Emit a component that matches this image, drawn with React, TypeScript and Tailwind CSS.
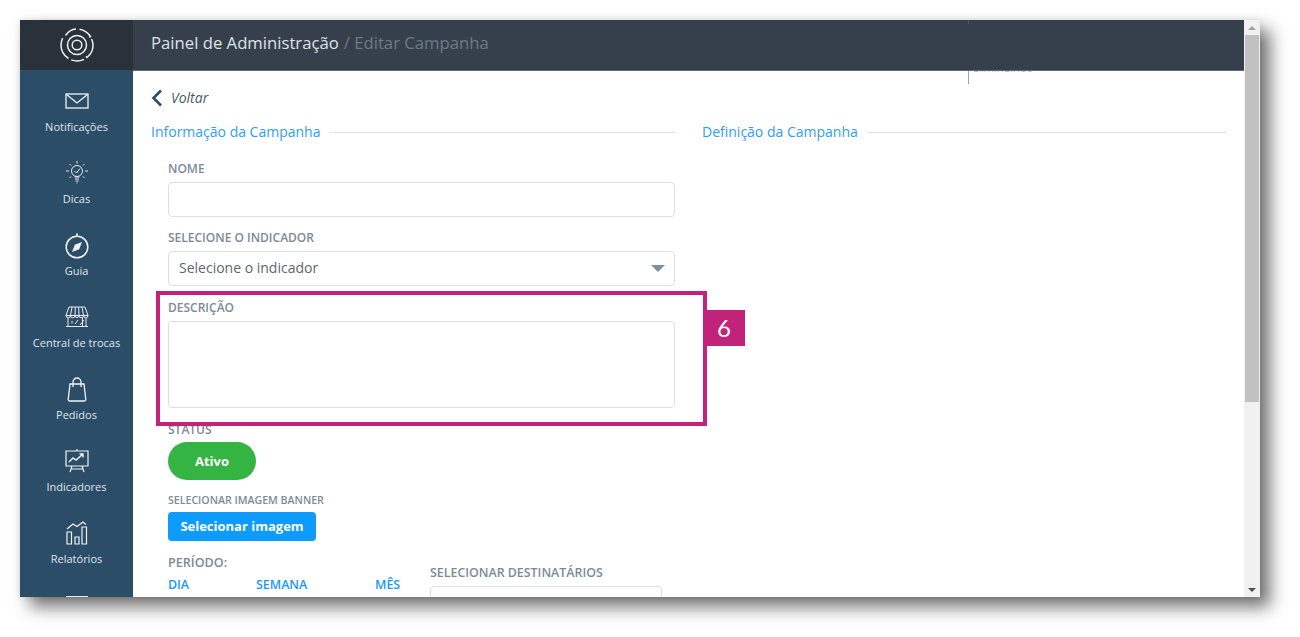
import type { ReactNode } from 'react';

function LogoIcon() {
  return (
    <svg width="34" height="34" viewBox="0 0 34 34" fill="none" stroke="#eef1f3" strokeWidth="1.500">
      <circle cx="17" cy="17" r="4.800" />
      <circle cx="17" cy="17" r="9.500" />
      <path d="M5.500 7.500C8.500 3.500 12.500 1.200 16 1.100M19.500 1.300C24 2 28 4.800 30.500 8.500l-1.300.8M31.500 11c1 2 1.500 4 1.500 6 0 5-2.200 9.500-6 12.500l-1-1.200M24 31.300c-2.200 1.100-4.500 1.700-7 1.700-2 0-4-.4-5.800-1.100M8.500 30.500C3.800 27.500 1 22.500 1 17c0-2.500.6-5 1.700-7" />
    </svg>
  );
}

function MailIcon() {
  return (
    <svg width="24" height="16" viewBox="0 0 24 16" fill="none" stroke="#f0f3f5" strokeWidth="1.300">
      <rect x="1" y="1" width="22" height="14" />
      <path d="M1.500 1.500L12 10l10.500-8.500" />
    </svg>
  );
}

function BulbIcon() {
  return (
    <svg width="22" height="24" viewBox="0 0 22 24" fill="none" stroke="#e6ebef" strokeWidth="1">
      <circle cx="11" cy="10" r="5.500" />
      <path d="M8.500 10l2 2 3.500-4.500M8.500 16h5M9 18h4M9.500 20h3M10.500 22h1" />
      <path d="M11 0v2.500M3.500 3l1.500 1.500M18.500 3L17 4.500M0 10h3M19 10h3M3.500 17l1.500-1.500M18.500 17L17 15.500" />
    </svg>
  );
}

function CompassIcon() {
  return (
    <svg width="24" height="27" viewBox="0 0 24 27" fill="none">
      <circle cx="12" cy="15" r="10.800" stroke="#f0f3f5" strokeWidth="1.500" />
      <path d="M11 1.500h2v2h-2z" fill="#f0f3f5" />
      <path d="M17 10l-2.800 7.200L7 20l2.800-7.200z" fill="#f0f3f5" />
    </svg>
  );
}

function StoreIcon() {
  return (
    <svg width="24" height="22" viewBox="0 0 24 22" fill="none" stroke="#e6ebef" strokeWidth="1">
      <path d="M4 1h16l3 8.500H1zM7 1L5.500 9.500M10.300 1L10 9.500M13.700 1L14 9.500M17 1l1.500 8.500" />
      <path d="M1 9.500a2 2 0 004.500 0M5.500 9.500a2.200 2.200 0 004.500 0M10 9.500a2 2 0 004 0M14 9.500a2.200 2.200 0 004.500 0M18.500 9.500a2 2 0 004.500 0" />
      <path d="M3 12v8M21 12v8M1 20.500h22M7 15v2.500M13 14l-3 4M19 14l-4 5M17.500 12v8" />
    </svg>
  );
}

function BagIcon() {
  return (
    <svg width="20" height="25" viewBox="0 0 20 25" fill="none" stroke="#f0f3f5" strokeWidth="1.300">
      <path d="M3 7h14l1.800 15.500a1.500 1.500 0 01-1.500 1.500H2.700a1.500 1.500 0 01-1.500-1.500z" />
      <path d="M6 10V5a4 4 0 018 0v5" />
    </svg>
  );
}

function BoardIcon() {
  return (
    <svg width="24" height="24" viewBox="0 0 24 24" fill="none" stroke="#f0f3f5" strokeWidth="1.200">
      <path d="M1 2h22v15H1zM12 0v2M7 17l-2 6M17 17l2 6M6 20h12" />
      <path d="M4 13l4-4 3 2 7-6M14.500 5H18v3.500" strokeWidth="1.400" />
    </svg>
  );
}

function BarsIcon() {
  return (
    <svg width="22" height="24" viewBox="0 0 22 24" fill="none" stroke="#f0f3f5" strokeWidth="1.200">
      <path d="M1 11h4.500v12H1zM9 16h4v7H9zM16 6h4.500v17H16z" />
      <path d="M1 8l6-5 4 2.500L17 1l3 2.500" />
    </svg>
  );
}

const navItems: { label: string; icon: ReactNode }[] = [
  { label: 'Notificações', icon: <MailIcon /> },
  { label: 'Dicas', icon: <BulbIcon /> },
  { label: 'Guia', icon: <CompassIcon /> },
  { label: 'Central de trocas', icon: <StoreIcon /> },
  { label: 'Pedidos', icon: <BagIcon /> },
  { label: 'Indicadores', icon: <BoardIcon /> },
  { label: 'Relatórios', icon: <BarsIcon /> },
];

function Label({ children, className = '' }: { children: ReactNode; className?: string }) {
  return <div className={`leading-[16px] font-semibold text-[#7b8a99] ${className}`}>{children}</div>;
}

function SectionTitle({ children }: { children: ReactNode }) {
  return (
    <div className="flex items-center gap-[9px]">
      <span className="text-[14px] leading-[20px] text-[#2f9dfb] whitespace-nowrap">{children}</span>
      <div className="h-px flex-1 bg-[#dfe1e3]" />
    </div>
  );
}

export default function App() {
  return (
    <div className="h-[637px] w-[1300px] overflow-hidden bg-white pl-[20px] pt-[20px] font-['Open_Sans',sans-serif]">
      <div className="relative flex h-[577px] w-[1240px] overflow-hidden shadow-[10px_10px_16px_rgba(0,0,0,0.55),0_0_6px_rgba(0,0,0,0.12)]">
        {/* menu lateral */}
        <aside className="flex w-[113px] shrink-0 flex-col bg-[#2c4d67]">
          <div className="flex h-[50px] shrink-0 items-center justify-center bg-[#29313a] pb-[1px]">
            <LogoIcon />
          </div>
          <div className="flex flex-col pt-[11px]">
            {navItems.map((item) => (
              <div key={item.label} className="flex h-[72px] shrink-0 flex-col items-center">
                <div className="flex h-[38px] items-center justify-center pt-[2px]">{item.icon}</div>
                <span className="text-[11px] leading-[15px] text-[#dfe5ea] whitespace-nowrap">{item.label}</span>
              </div>
            ))}
            <div className="mx-auto mt-[11px] h-px w-[22px] bg-[#dfe5ea]" />
          </div>
        </aside>

        <main className="flex min-w-0 flex-1 flex-col bg-white">
          <header className="flex h-[51px] shrink-0 items-center border-b border-[#5f6b78] bg-[#36404c] pb-[5px] pl-[18px]">
            <span className="text-[16.700px] text-[#dfe3e6]">Painel de Administração</span>
            <span className="ml-[5px] text-[16.700px] text-[#6d7a88]">/ Editar Campanha</span>
          </header>

          <div className="flex items-center px-[18px] pt-[17px]">
            <svg width="12" height="18" viewBox="0 0 12 18" fill="none" stroke="#2c4d67" strokeWidth="2.600">
              <path d="M10 1.500L2.500 9l7.500 7.500" />
            </svg>
            <span className="ml-[8px] text-[14px] italic leading-[20px] text-[#4a5a69]">Voltar</span>
          </div>

          <div className="mt-[14px] flex gap-[27px] px-[18px]">
            <div className="w-[524px] shrink-0">
              <SectionTitle>Informação da Campanha</SectionTitle>
              <div className="pl-[17px]">
                <Label className="mt-[19px] text-[12px]">NOME</Label>
                <div className="mt-[5px] h-[35px] rounded-[4px] border border-[#dddfe1] bg-white" />

                <Label className="mt-[13px] text-[12px]">SELECIONE O INDICADOR</Label>
                <div className="mt-[5px] flex h-[35px] items-center justify-between rounded-[4px] border border-[#dddfe1] bg-white pb-[2px] pl-[10px] pr-[9px]">
                  <span className="text-[14px] text-[#5b6670]">Selecione o indicador</span>
                  <div className="mt-[2px] h-0 w-0 border-x-[7px] border-t-[7px] border-x-transparent border-t-[#7f8f9e]" />
                </div>

                <Label className="mt-[14px] text-[12px]">DESCRIÇÃO</Label>
                <div className="mt-[5px] h-[87px] rounded-[4px] border border-[#dddfe1] bg-white" />

                <Label className="mt-[14px] text-[12px]">STATUS</Label>
                <div className="mt-[4px] flex h-[38px] w-[88px] items-center justify-center rounded-full bg-[#34b443] pt-[1px] text-[13px] font-bold text-white">
                  Ativo
                </div>

                <div className="mt-[13px] text-[10.600px] font-semibold leading-[14px] text-[#7b8a99]">SELECIONAR IMAGEM BANNER</div>
                <div className="mt-[5px] flex h-[29px] w-[148px] items-center justify-center rounded-[4px] bg-[#0d9bfd] text-[13px] font-bold text-white">
                  Selecionar imagem
                </div>

                <div className="mt-[14px] flex">
                  <div className="w-[262px] shrink-0">
                    <Label className="text-[12.600px]">PERÍODO:</Label>
                    <div className="mt-[6px] flex text-[12.400px] font-semibold leading-[16px] text-[#1a98f8]">
                      <span className="w-[88px]">DIA</span>
                      <span className="w-[119px]">SEMANA</span>
                      <span>MÊS</span>
                    </div>
                  </div>
                  <div className="w-[232px] pt-[10px]">
                    <Label className="text-[12.400px]">SELECIONAR DESTINATÁRIOS</Label>
                    <div className="mt-[5px] h-[35px] rounded-[4px] border border-[#dddfe1] bg-white" />
                  </div>
                </div>
              </div>
            </div>

            <div className="min-w-0 flex-1">
              <SectionTitle>Definição da Campanha</SectionTitle>
            </div>
          </div>
        </main>

        {/* barra de rolagem */}
        <div className="flex w-[16px] shrink-0 flex-col items-center bg-[#f1f1f1]">
          <div className="flex h-[15px] items-center justify-center">
            <div className="h-0 w-0 border-x-[4px] border-b-[4px] border-x-transparent border-b-[#a3a3a3]" />
          </div>
          <div className="h-[367px] w-[14px] bg-[#c1c1c1]" />
          <div className="flex-1" />
          <div className="flex h-[15px] items-center justify-center">
            <div className="h-0 w-0 border-x-[4px] border-t-[4px] border-x-transparent border-t-[#505050]" />
          </div>
        </div>

        {/* restos do conteúdo que rola atrás do cabeçalho */}
        <div className="absolute left-[948px] top-0 h-[4px] w-px bg-[#4d5864]" />
        <div className="absolute left-[948px] top-[51px] h-[13px] w-px bg-[#9aa5b0]" />
        <div className="absolute left-[953px] top-[51px] h-[3px] overflow-hidden">
          <div className="mt-[-10px] text-[11px] leading-[14px] text-[#a9b6c2]">Diminuindo</div>
        </div>

        {/* destaque do tutorial */}
        <div className="absolute left-[136px] top-[271px] h-[135px] w-[551px] border-[4px] border-[#c2237a]" />
        <div className="absolute left-[687px] top-[290px] flex h-[36px] w-[38px] items-center justify-center bg-[#c2237a] pr-[4px] font-['Lato',sans-serif] text-[24px] text-white">
          6
        </div>
      </div>
    </div>
  );
}
